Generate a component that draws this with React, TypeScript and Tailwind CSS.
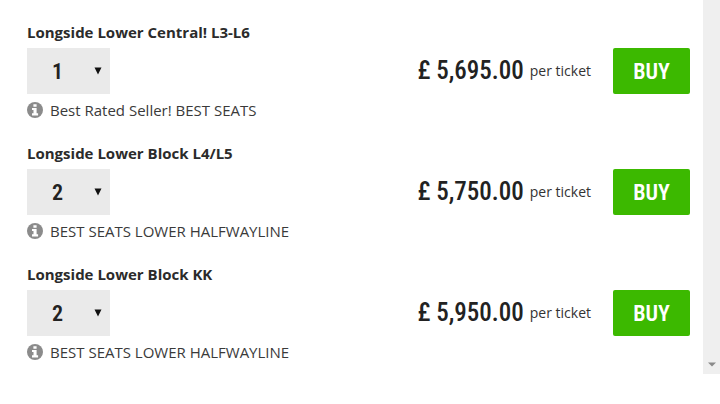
import React, { useState } from "react";

interface Listing {
  id: string;
  title: string;
  quantity: number;
  note: string;
  price: string;
}

const listings: Listing[] = [
  {
    id: "central-l3-l6",
    title: "Longside Lower Central! L3-L6",
    quantity: 1,
    note: "Best Rated Seller! BEST SEATS",
    price: "5,695.00",
  },
  {
    id: "block-l4-l5",
    title: "Longside Lower Block L4/L5",
    quantity: 2,
    note: "BEST SEATS LOWER HALFWAYLINE",
    price: "5,750.00",
  },
  {
    id: "block-kk",
    title: "Longside Lower Block KK",
    quantity: 2,
    note: "BEST SEATS LOWER HALFWAYLINE",
    price: "5,950.00",
  },
];

function InfoIcon() {
  return (
    <svg viewBox="0 0 16 16" className="w-4 h-4 shrink-0" aria-hidden="true">
      <circle cx="8" cy="8" r="8" fill="#8b8b8b" />
      <path
        d="M6.4 2.2h3.2v2.5H6.4zM5 6h4.6v5.3h1.5v2.1H5v-2.1h1.5V8.1H5z"
        fill="#fff"
      />
    </svg>
  );
}

function ListingRow({ listing }: { listing: Listing }) {
  const [quantity, setQuantity] = useState(listing.quantity);

  return (
    <li>
      <label
        htmlFor={listing.id}
        className="block text-[15px] leading-5 font-bold text-[#2b2b2b]"
      >
        {listing.title}
      </label>

      <div className="flex items-center justify-between my-1.5">
        <div className="relative">
          <select
            id={listing.id}
            value={quantity}
            onChange={(e) => setQuantity(Number(e.target.value))}
            className="block appearance-none w-[83px] h-[46px] pl-[25px] bg-[#eaeaea] font-['Roboto_Condensed',Roboto,sans-serif] text-[22px] font-semibold text-[#222]"
          >
            {[1, 2].map((n) => (
              <option key={n} value={n}>
                {n}
              </option>
            ))}
          </select>
          <svg
            viewBox="0 0 8 8"
            className="absolute right-2 top-[19px] w-2 h-2 pointer-events-none"
            aria-hidden="true"
          >
            <path d="M0.5 0.5h7L4 7.5z" fill="#111" />
          </svg>
        </div>

        <div className="flex items-center">
          <span className="font-['Roboto_Condensed',Roboto,sans-serif] text-[25px] leading-8 font-medium text-[#222]">
            £ {listing.price}
          </span>
          <span className="ml-1.5 text-[14px] leading-5 text-[#333]">
            per ticket
          </span>
          <button
            type="button"
            className="ml-[22px] w-[77px] h-[46px] rounded-[2px] bg-[#3cb900] font-['Roboto_Condensed',Roboto,sans-serif] text-[22px] font-semibold text-white"
          >
            BUY
          </button>
        </div>
      </div>

      <p className="flex items-center gap-[7px] text-[15px] leading-5 text-[#3a3a3a]">
        <InfoIcon />
        {listing.note}
      </p>
    </li>
  );
}

function App() {
  return (
    <div className="flex bg-white font-['Open_Sans',sans-serif]">
      <ul className="flex-1 flex flex-col gap-[23px] pt-[22px] pb-3 pl-[27px] pr-[13px]">
        {listings.map((listing) => (
          <ListingRow key={listing.id} listing={listing} />
        ))}
      </ul>

      {/* Scroll track */}
      <div className="flex items-end justify-center w-[17px] pb-[7px] bg-[#efefef]">
        <svg viewBox="0 0 8 5" className="w-2 h-[5px]" aria-hidden="true">
          <path d="M0 0.5h8L4 4.5z" fill="#8a8a8a" />
        </svg>
      </div>
    </div>
  );
}

export default App;
